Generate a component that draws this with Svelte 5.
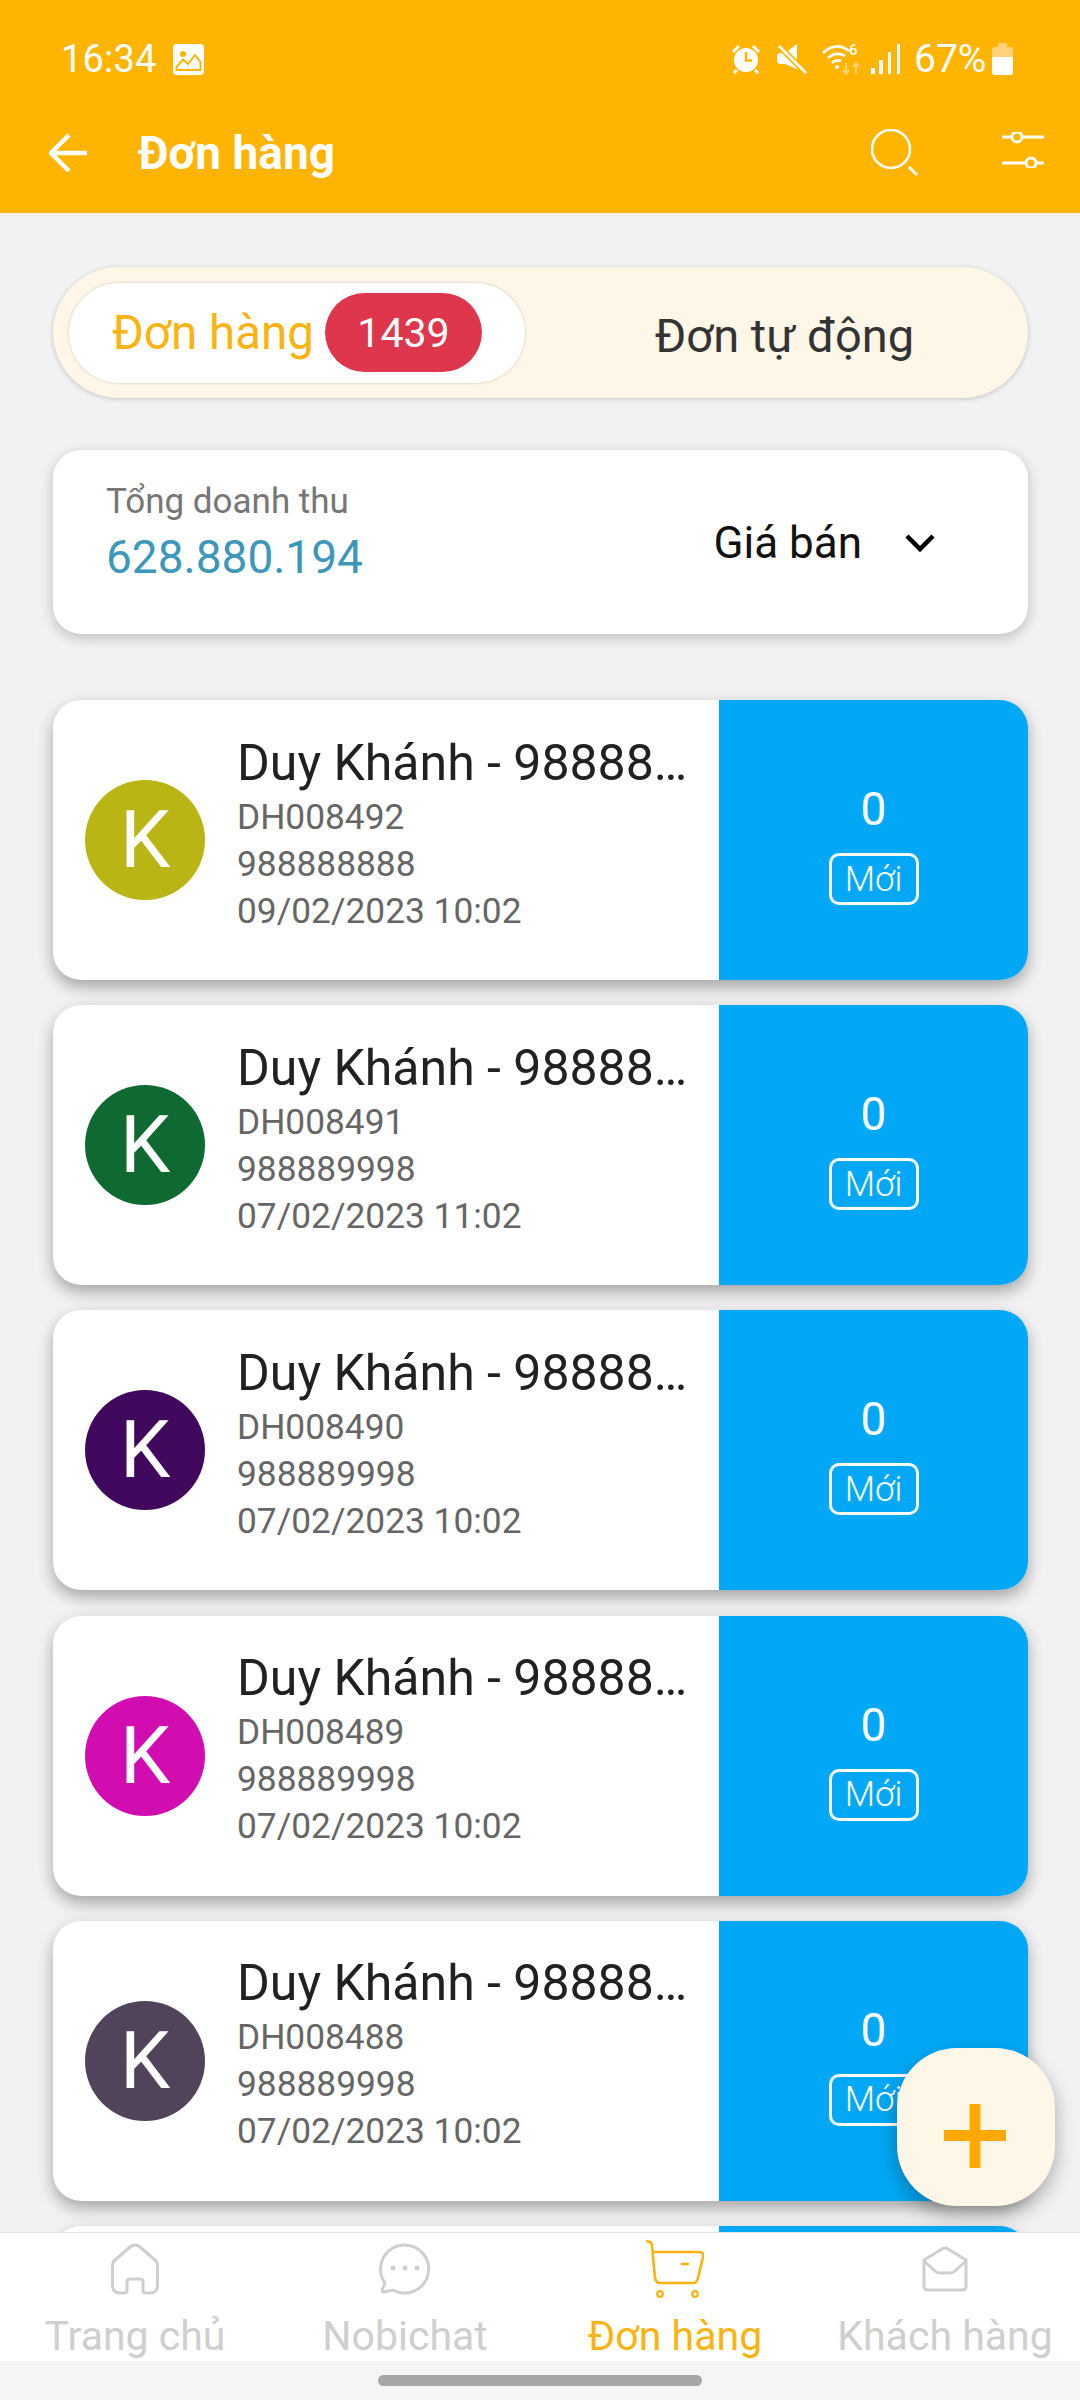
<script lang="ts">
	const orders = [
		{ code: 'DH008492', phone: '988888888', date: '09/02/2023 10:02', color: '#b8b514' },
		{ code: 'DH008491', phone: '988889998', date: '07/02/2023 11:02', color: '#0e6a31' },
		{ code: 'DH008490', phone: '988889998', date: '07/02/2023 10:02', color: '#41095e' },
		{ code: 'DH008489', phone: '988889998', date: '07/02/2023 10:02', color: '#d10daf' },
		{ code: 'DH008488', phone: '988889998', date: '07/02/2023 10:02', color: '#50435a' },
		{ code: 'DH008487', phone: '988889998', date: '07/02/2023 10:02', color: '#50435a' }
	];
</script>

<div class="screen">
	<header class="top">
		<div class="status">
			<span class="time">16:34</span>
			<svg class="pic" width="31" height="31" viewBox="0 0 31 31">
				<rect width="31" height="31" rx="4" fill="#fff" />
				<circle cx="10" cy="10" r="3" fill="#ffb400" />
				<path d="M3.5 26 V23 L10 15.5 L15 20 L22 11 L27.5 18 V26 Z" fill="none" stroke="#ffb400" stroke-width="2" />
			</svg>
			<div class="spacer"></div>
			<svg class="st" width="30" height="30" viewBox="0 0 30 30">
				<circle cx="15" cy="16" r="12" fill="#fff" />
				<path d="M15 8 V16.5 H21" fill="none" stroke="#ffb400" stroke-width="2.5" />
				<path d="M2 8 L8 2 M28 8 L22 2 M6 26 L3 29 M24 26 L27 29" stroke="#fff" stroke-width="3" />
			</svg>
			<svg class="st mute" width="32" height="32" viewBox="0 0 32 32">
				<path d="M1 13 Q1 10 5 10 H9 L21 1 V26 L9 21 H5 Q1 21 1 17 Z" fill="#fff" />
				<path d="M3 3 L30 30" stroke="#ffb400" stroke-width="6" />
				<path d="M3 3 L30 30" stroke="#fff" stroke-width="2.5" />
			</svg>
			<svg class="st wifi" width="40" height="32" viewBox="0 0 40 32">
				<path d="M1 10 Q14 -2 27 8 M6 15 Q14 8 23 13 M10 20 Q14 16 19 18" fill="none" stroke="#fff" stroke-width="2.6" />
				<circle cx="15" cy="24" r="2" fill="#fff" />
				<path d="M24 20 V31 M21 27 L24 31 L27 27 M34 31 V20 M31 24 L34 20 L37 24" fill="none" stroke="#ffd27a" stroke-width="2" />
				<text x="27" y="12" class="six">6</text>
			</svg>
			<svg class="st signal" width="29" height="30" viewBox="0 0 29 30">
				<rect x="0" y="24" width="4" height="6" fill="#fff" />
				<rect x="8" y="16" width="4" height="14" fill="#fff" />
				<rect x="17" y="8" width="3" height="22" fill="#fff" />
				<rect x="26" y="0" width="3" height="30" fill="#fff" />
			</svg>
			<span class="pct">67%</span>
			<svg class="batt" width="21" height="32" viewBox="0 0 21 32">
				<path d="M6 2 Q6 0 8 0 H13 Q15 0 15 2 V4 H18 Q21 4 21 7 V29 Q21 32 18 32 H3 Q0 32 0 29 V7 Q0 4 3 4 H6 Z" fill="#ffd27a" />
				<path d="M0 14 H21 V29 Q21 32 18 32 H3 Q0 32 0 29 Z" fill="#fff" />
			</svg>
		</div>
		<div class="bar">
			<svg class="back" width="40" height="40" viewBox="0 0 40 40">
				<path d="M38 20 H3 M20 2 L2 20 L20 38" fill="none" stroke="#fff" stroke-width="4.5" />
			</svg>
			<h1>Đơn hàng</h1>
			<svg class="search" width="48" height="48" viewBox="0 0 48 48">
				<circle cx="20" cy="20" r="19" fill="none" stroke="#fff" stroke-width="2.6" />
				<path d="M38 38 L46 46" stroke="#fff" stroke-width="3" />
			</svg>
			<svg class="tune" width="42" height="36" viewBox="0 0 42 36">
				<path d="M0 5 H10 M20 5 H42 M0 31 H24 M34 31 H42" stroke="#fff" stroke-width="3" />
				<circle cx="15" cy="5" r="5" fill="none" stroke="#fff" stroke-width="3" />
				<circle cx="29" cy="31" r="5" fill="none" stroke="#fff" stroke-width="3" />
			</svg>
		</div>
	</header>

	<main class="content">
		<div class="tabs">
			<div class="tab-on">
				<span>Đơn hàng</span>
				<span class="count">1439</span>
			</div>
			<div class="tab-off">Đơn tự động</div>
		</div>

		<section class="summary">
			<div>
				<div class="sum-label">Tổng doanh thu</div>
				<div class="sum-value">628.880.194</div>
			</div>
			<div class="price">
				<span>Giá bán</span>
				<svg width="32" height="20" viewBox="0 0 32 20">
					<path d="M3 3 L16 16 L29 3" fill="none" stroke="#000" stroke-width="4.5" />
				</svg>
			</div>
		</section>

		<div class="list">
			{#each orders as o}
				<article class="card">
					<div class="info">
						<div class="avatar" style="background: {o.color}">K</div>
						<div class="lines">
							<div class="name">Duy Khánh - 988888888</div>
							<div class="sub">{o.code}</div>
							<div class="sub">{o.phone}</div>
							<div class="sub">{o.date}</div>
						</div>
					</div>
					<div class="state">
						<div class="num">0</div>
						<div class="tag">Mới</div>
					</div>
				</article>
			{/each}
		</div>

		<button class="fab" aria-label="Thêm">
			<svg width="62" height="64" viewBox="0 0 62 64">
				<path d="M0 31.500 H62 M31 0 V64" stroke="#ffa900" stroke-width="11" />
			</svg>
		</button>
	</main>

	<nav class="nav">
		<div class="item">
			<svg width="48" height="52" viewBox="0 0 48 52">
				<path d="M24 2 Q21.500 2 19 4 L4 17 Q1.500 19 1.500 23 V42 Q1.500 50 9 50 H13 Q16 50 16 47 V39 Q16 36 19 36 H29 Q32 36 32 39 V47 Q32 50 35 50 H39 Q46.500 50 46.500 42 V23 Q46.500 19 44 17 L29 4 Q26.500 2 24 2 Z" fill="none" stroke="#cfcfcf" stroke-width="3" />
			</svg>
			<span>Trang chủ</span>
		</div>
		<div class="item">
			<svg width="52" height="52" viewBox="0 0 52 52">
				<path d="M26 2 A24 24 0 1 1 14 47 L5 49 Q2.500 49 3.500 46 L6 40 A24 24 0 0 1 26 2 Z" fill="none" stroke="#cfcfcf" stroke-width="3" />
				<circle cx="14" cy="25" r="2.500" fill="#cfcfcf" />
				<circle cx="26" cy="25" r="2.500" fill="#cfcfcf" />
				<circle cx="38" cy="25" r="2.500" fill="#cfcfcf" />
			</svg>
			<span>Nobichat</span>
		</div>
		<div class="item active">
			<svg width="58" height="58" viewBox="0 0 58 58">
				<path d="M0 1 L4 2 Q6 3 6 6 L9 38 Q10 43 14 43 H47 Q51 43 52 38 L57 17 Q58 12 53 12 H6" fill="none" stroke="#f9b312" stroke-width="2.600" />
				<path d="M35 24 H43" stroke="#f9b312" stroke-width="2.600" />
				<circle cx="14" cy="54" r="2.800" fill="none" stroke="#f9b312" stroke-width="2.200" />
				<circle cx="49" cy="54" r="2.800" fill="none" stroke="#f9b312" stroke-width="2.200" />
			</svg>
			<span>Đơn hàng</span>
		</div>
		<div class="item">
			<svg width="46" height="46" viewBox="0 0 46 46">
				<path d="M2 14 L20 3 Q23 1 26 3 L44 14 V40 Q44 44 40 44 H6 Q2 44 2 40 Z" fill="none" stroke="#cfcfcf" stroke-width="3" />
				<path d="M2 15 L13 25 Q15 27 18 27 H28 Q31 27 33 25 L44 15" fill="none" stroke="#cfcfcf" stroke-width="3" />
			</svg>
			<span>Khách hàng</span>
		</div>
	</nav>
	<div class="home"><div class="pill"></div></div>
</div>

<style>
	:global(body) {
		margin: 0;
	}
	.screen {
		width: 1080px;
		height: 2400px;
		display: flex;
		flex-direction: column;
		background: #f2f2f2;
		font-family: Roboto, "Noto Sans", sans-serif;
		overflow: hidden;
	}
	.top {
		height: 213px;
		flex: none;
		background: #ffb400;
		color: #fff;
		box-sizing: border-box;
		padding-top: 40px;
	}
	.status {
		height: 38px;
		display: flex;
		align-items: center;
		padding: 0 67px 0 61px;
	}
	.time {
		font-size: 38px;
		width: 112px;
		letter-spacing: 0.2px;
	}
	.spacer {
		flex: 1;
	}
	.st {
		flex: none;
	}
	.mute {
		margin-left: 15px;
	}
	.wifi {
		margin-left: 14px;
	}
	.wifi .six {
		font-size: 15px;
		font-weight: 500;
		fill: #fff;
	}
	.signal {
		margin-left: 9px;
	}
	.pct {
		font-size: 39px;
		margin-left: 14px;
		width: 78px;
	}
	.batt {
		flex: none;
	}
	.bar {
		display: flex;
		align-items: center;
		height: 60px;
		margin-top: 45px;
		padding: 0 36px 0 49px;
	}
	.back {
		flex: none;
		margin-right: 49px;
	}
	h1 {
		flex: 1;
		margin: 0;
		font-size: 46px;
		font-weight: 700;
	}
	.search {
		flex: none;
		margin-right: 83px;
	}
	.tune {
		flex: none;
		margin-bottom: 6px;
	}
	.content {
		flex: 1;
		min-height: 0;
		position: relative;
		padding: 54px 52px 0 53px;
		overflow: hidden;
	}
	.tabs {
		height: 131px;
		box-sizing: border-box;
		padding: 16px;
		display: flex;
		align-items: center;
		background: #fef6e6;
		border-radius: 66px;
		box-shadow: 0 1px 5px rgba(0, 0, 0, 0.2);
	}
	.tab-on {
		width: 456px;
		height: 100px;
		box-sizing: border-box;
		flex: none;
		display: flex;
		align-items: center;
		padding-left: 43px;
		gap: 11px;
		background: #fff;
		border-radius: 50px;
		box-shadow: 0 0 3px rgba(0, 0, 0, 0.2);
		font-size: 47.5px;
		color: #f9b312;
	}
	.count {
		width: 157px;
		height: 79px;
		display: flex;
		align-items: center;
		justify-content: center;
		background: #de364d;
		border-radius: 40px;
		color: #fff;
		font-size: 41px;
	}
	.tab-off {
		flex: 1;
		text-align: center;
		font-size: 47px;
		color: #333;
		padding-left: 32px;
		padding-top: 6px;
	}
	.summary {
		height: 184px;
		margin-top: 52px;
		box-sizing: border-box;
		padding: 30px 92px 0 53px;
		display: flex;
		justify-content: space-between;
		background: #fff;
		border-radius: 28px;
		box-shadow: 0 4px 14px rgba(0, 0, 0, 0.22);
	}
	.sum-label {
		font-size: 35px;
		line-height: 44px;
		color: #767676;
	}
	.sum-value {
		font-size: 46px;
		line-height: 56px;
		margin-top: 5px;
		color: #3d97b8;
	}
	.price {
		display: flex;
		align-items: center;
		height: 62px;
		margin-top: 32px;
		gap: 42px;
		font-size: 44px;
		color: #111;
	}
	.list {
		margin-top: 66px;
		display: flex;
		flex-direction: column;
		gap: 25.2px;
	}
	.card {
		height: 280px;
		flex: none;
		display: flex;
		background: #fff;
		border-radius: 28px;
		box-shadow: 0 7px 16px rgba(0, 0, 0, 0.32);
		overflow: hidden;
	}
	.info {
		width: 666px;
		flex: none;
		box-sizing: border-box;
		display: flex;
		align-items: center;
		padding-left: 32px;
		gap: 32px;
	}
	.avatar {
		width: 120px;
		height: 120px;
		flex: none;
		margin-top: 0;
		border-radius: 50%;
		color: #fff;
		font-size: 80px;
		font-weight: 400;
		display: flex;
		align-items: center;
		justify-content: center;
	}
	.lines {
		width: 460px;
		padding-bottom: 12px;
	}
	.name {
		font-size: 50px;
		line-height: 58px;
		color: #212121;
		white-space: nowrap;
		overflow: hidden;
		text-overflow: ellipsis;
		margin-bottom: 2px;
	}
	.sub {
		font-size: 35.3px;
		line-height: 47px;
		color: #666;
	}
	.state {
		flex: 1;
		background: #02a8f5;
		color: #fff;
		display: flex;
		flex-direction: column;
		align-items: center;
		padding-top: 81px;
	}
	.num {
		font-size: 46px;
		line-height: 56px;
		font-weight: 400;
	}
	.tag {
		margin-top: 16px;
		width: 90px;
		height: 52px;
		box-sizing: border-box;
		border: 3px solid #fff;
		border-radius: 10px;
		display: flex;
		align-items: center;
		justify-content: center;
		font-size: 35px;
		font-weight: 300;
	}
	.fab {
		position: absolute;
		left: 897px;
		top: 1835px;
		width: 158px;
		height: 158px;
		border: none;
		padding: 18px 3px 0 0;
		box-sizing: border-box;
		display: flex;
		align-items: center;
		justify-content: center;
		background: #fef6e6;
		border-radius: 60px;
		box-shadow: 0 8px 20px rgba(0, 0, 0, 0.3);
	}
	.nav {
		height: 129px;
		flex: none;
		display: grid;
		grid-template-columns: repeat(4, 270px);
		background: #fff;
		border-top: 1px solid #e6e6e6;
		box-sizing: border-box;
	}
	.item {
		position: relative;
		display: flex;
		flex-direction: column;
		align-items: center;
		color: #cfcfcf;
		font-size: 41px;
		height: 128px;
	}
	.item svg {
		height: 66px;
		margin-top: 3px;
		flex: none;
	}
	.item span {
		line-height: 46px;
		margin-top: 11px;
	}
	.item.active {
		color: #f9b312;
	}
	.home {
		height: 39px;
		flex: none;
		background: #f5f5f5;
		display: flex;
		justify-content: center;
		padding-top: 14px;
		box-sizing: border-box;
	}
	.pill {
		width: 324px;
		height: 11px;
		border-radius: 6px;
		background: #a6a6a6;
	}
</style>
